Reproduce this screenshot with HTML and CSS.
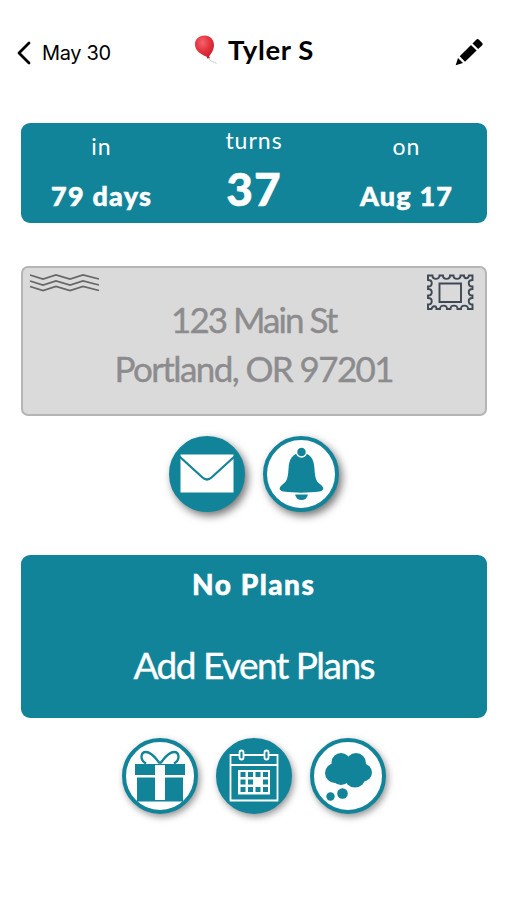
FILE: index.html
```html
<!DOCTYPE html>
<html lang="en">
<head>
<meta charset="utf-8">
<title>Tyler S</title>
<link rel="stylesheet" href="styles.css">
</head>
<body>
<header class="top">
  <a class="back"><svg width="15" height="24" viewBox="0 0 15 24"><path d="M13 2 3 12l10 10" fill="none" stroke="#000" stroke-width="2.8" stroke-linecap="round" stroke-linejoin="round"/></svg><span>May 30</span></a>
  <h1 class="name"><svg width="24" height="30" viewBox="0 0 24 30"><defs><radialGradient id="red" cx=".4" cy=".3" r=".7"><stop offset="0" stop-color="#f4656a"/><stop offset=".55" stop-color="#e5323f"/><stop offset="1" stop-color="#c91f2d"/></radialGradient></defs><path d="M14.500 22q1 4 4 4.700 3 .5 4 2" fill="none" stroke="#bbb" stroke-width=".8"/><path d="M10.500.5C16 .5 20 4.500 20 10c0 5-3 9-5 11.500l1 1.500-3 .6-.2-1.800C8 20 1 16 1 9.500 1 4 5 .5 10.500.5z" fill="url(#red)"/></svg><span>Tyler S</span></h1>
  <a class="edit"><svg width="28" height="28" viewBox="0 0 28 28"><path d="M.7 27.300 3 20l5 5z"/><path d="M4.700 18.300 16 6.900l5.600 5.600L10 23.800z"/><path d="m17.500 5.400 3.700-3.700q1.400-1.400 2.800 0l3 3q1.400 1.400 0 2.800L23.200 11z"/></svg></a>
</header>
<main>
  <section class="card countdown">
    <div class="cell"><span class="label">in</span><strong class="days">79 days</strong></div>
    <div class="cell mid"><span class="label turns">turns</span><strong class="age">37</strong></div>
    <div class="cell"><span class="label">on</span><strong class="date">Aug 17</strong></div>
  </section>
  <section class="envelope">
    <svg class="waves" width="72" height="20" viewBox="0 0 72 20"><g fill="none" stroke="#666" stroke-width="1.800"><path d="m1 2 13 4 13-4 14 4 13-4 16 4"/><path d="m1 8 13 4 13-4 14 4 13-4 16 4"/><path d="m1 13.500 13 4 13-4 14 4 13-4 16 4"/></g></svg>
    <svg class="stamp" width="48" height="37" viewBox="0 0 48 37"><g fill="none" stroke="#3f4855" stroke-width="1.900"><path d="M2 1.500h4.500c0 4.500 7 4.500 7 0h3.500c0 4.500 7 4.500 7 0h3.500c0 4.500 7 4.500 7 0h3.500c0 3.500 4 4 5 0h3.500v4.500c-5 0-5 6.500 0 6.500v2.500c-5 0-5 6.500 0 6.500v2.500c-5 0-5 6.500 0 6.500v4.500h-4.500c0-4.500-7-4.500-7 0h-3.500c0-4.500-7-4.500-7 0h-3.500c0-4.500-7-4.500-7 0h-3.500c0-3.500-4-4-5 0H2v-4.500c5 0 5-6.500 0-6.500v-2.500c5 0 5-6.500 0-6.500v-2.500c5 0 5-6.500 0-6.500z"/><path d="M13.500 9.500H35v18.500H13.500z"/></g></svg>
    <p class="hand street">123 Main St</p>
    <p class="hand city">Portland, OR 97201</p>
  </section>
  <nav class="actions">
    <button class="round solid" aria-label="Mail"><svg viewBox="0 0 76 76"><path fill="#fff" d="M11.500 18.500h53v38h-53z"/><path d="m10.500 20.500 23 21q4.500 4 9 0l23-21" fill="none" stroke="#12849a" stroke-width="2.200"/></svg></button>
    <button class="round" aria-label="Reminder"><svg viewBox="0 0 76 76"><g fill="#12849a"><path d="M38.500 17c9 0 12.500 6 13 16 .6 11 2.500 13 6 15.500 5 4 2.500 6.500-1 7-11 1.500-25 1.500-36 0-3.500-.5-6-3-1-7 3.500-2.500 5.400-4.500 6-15.500.5-10 4-16 13-16z"/><path d="M32 58.500h13q-1.500 5.500-6.500 5.500T32 58.500z"/><circle cx="38.500" cy="16" r="5" stroke="#fff" stroke-width="1.500"/></g></svg></button>
  </nav>
  <section class="card plans">
    <h2>No Plans</h2>
    <p class="hand add">Add Event Plans</p>
  </section>
  <nav class="actions lower">
    <button class="round" aria-label="Gifts"><svg viewBox="0 0 76 76"><g fill="#12849a"><path d="M13 26h50v11H13zM15 39.500h46v24H15z"/></g><g fill="none" stroke="#12849a" stroke-width="2.300"><path d="M38 25.500C34 21 30 14 24 14c-5.500 0-6.500 8 0 11.500M38 25.500C42 21 46 14 52 14c5.500 0 6.500 8 0 11.500"/></g><path fill="#fff" d="M33 27h10v35H33z"/></svg></button>
    <button class="round solid" aria-label="Calendar"><svg viewBox="0 0 76 76"><g fill="none" stroke="#fff" stroke-width="1.800"><path d="M14.500 17h47v45.500h-47zM14.500 27h47"/><rect x="23.500" y="12.500" width="4" height="9" rx="2" fill="#12849a"/><rect x="48.500" y="12.500" width="4" height="9" rx="2" fill="#12849a"/></g><path fill="#fff" d="M22 32h32v24.500H22z"/><g fill="#12849a"><path d="M24.500 34h5v5h-5zM32 34h5v5h-5zM39.500 34h5v5h-5zM47 34h5v5h-5zM24.500 41.500h5v5h-5zM32 41.500h5v5h-5zM47 41.500h5v5h-5zM24.500 49h5v5h-5zM32 49h5v5h-5zM39.500 49h5v5h-5zM47 49h5v5h-5z"/></g></svg></button>
    <button class="round" aria-label="Ideas"><svg viewBox="0 0 76 76"><g fill="#12849a"><circle cx="25" cy="35" r="10"/><circle cx="31" cy="24.500" r="9.500"/><circle cx="46" cy="25" r="10"/><circle cx="53" cy="34.500" r="9"/><circle cx="45" cy="39" r="10.500"/><circle cx="31" cy="37" r="10"/><circle cx="32.500" cy="55.500" r="5.300"/><circle cx="20.500" cy="58.500" r="4.200"/></g></svg></button>
  </nav>
</main>
</body>
</html>
```
FILE: styles.css
```css
* { box-sizing: border-box; }
body { margin: 0; min-height: 900px; background: #fff; color: #000; font-family: Lato, sans-serif; }
h1, h2, p { margin: 0; }
.top { height: 123px; padding: 0 24px 0 16px; display: grid; grid-template-columns: 1fr auto 1fr; align-items: start; }
.back { display: flex; align-items: center; gap: 11px; padding-top: 37px; font: 400 20px/30px Inter, sans-serif; letter-spacing: -.35px; }
.back span { padding-top: 1px; }
.name { display: flex; align-items: center; gap: 10px; padding: 31px 0 0 9px; font-size: 27.500px; line-height: 38px; font-weight: 700; letter-spacing: .6px; white-space: nowrap; }
.edit { justify-self: end; padding-top: 38px; height: 66px; }
.edit svg, .back svg, .name svg { display: block; }
main { margin: 0 20px 0 20.5px; }
.card { background: #12849a; color: #fff; border-radius: 9px; }
.countdown { width: 466.5px; height: 99.5px; display: grid; grid-template-columns: 161px 144px 161px; text-align: center; }
.cell { display: flex; flex-direction: column; align-items: center; padding-top: 8px; }
.cell.mid { padding-top: 2px; }
.label { font-size: 23px; line-height: 30px; letter-spacing: 1px; margin-right: -1px; }
.days, .date { margin-top: 18px; font-size: 27px; line-height: 34px; font-weight: 900; letter-spacing: 1.2px; margin-right: -1.2px; }
.age { margin-top: 7px; font-size: 46px; line-height: 54px; font-weight: 900; letter-spacing: 1px; margin-right: -1px; }
.days, .date, .age, .plans h2 { -webkit-text-stroke: .5px currentColor; }
.envelope { position: relative; width: 466.5px; height: 150px; margin-top: 43.5px; padding-top: 27px; border: 2px solid #b5b5b5; border-radius: 7px; background: #dadada; color: #8c8c8e; text-align: center; }
.waves { position: absolute; left: 6px; top: 5px; }
.stamp { position: absolute; right: 11px; top: 6px; }
.hand { font-family: Lato, cursive; font-weight: 400; white-space: nowrap; -webkit-text-stroke: .4px currentColor; }
.street, .city { font-size: 35px; line-height: 49px; }
.street { letter-spacing: -1.95px; }
.city { letter-spacing: -1.6px; }
.actions { display: flex; justify-content: center; gap: 18px; margin-top: 19px; }
.round { width: 76px; height: 76px; padding: 0; border: 4px solid #12849a; border-radius: 50%; background: #fff; box-shadow: 3px 4px 8px rgba(0,0,0,.55); }
.round.solid { background: #12849a; }
.round svg { display: block; width: 76px; height: 76px; margin: -4px; }
.plans { width: 466.5px; height: 163px; margin-top: 43px; padding-top: 10px; text-align: center; }
.envelope + .actions { margin-top: 20px; }
.plans h2 { font-size: 28px; line-height: 38px; font-weight: 900; letter-spacing: 1.5px; }
.add { margin-top: 37px; font-size: 37px; line-height: 50px; letter-spacing: -1.5px; }
.lower { margin-top: 20px; }
.lower .round { box-shadow: 2px 3px 7px rgba(0,0,0,.42); }
```
